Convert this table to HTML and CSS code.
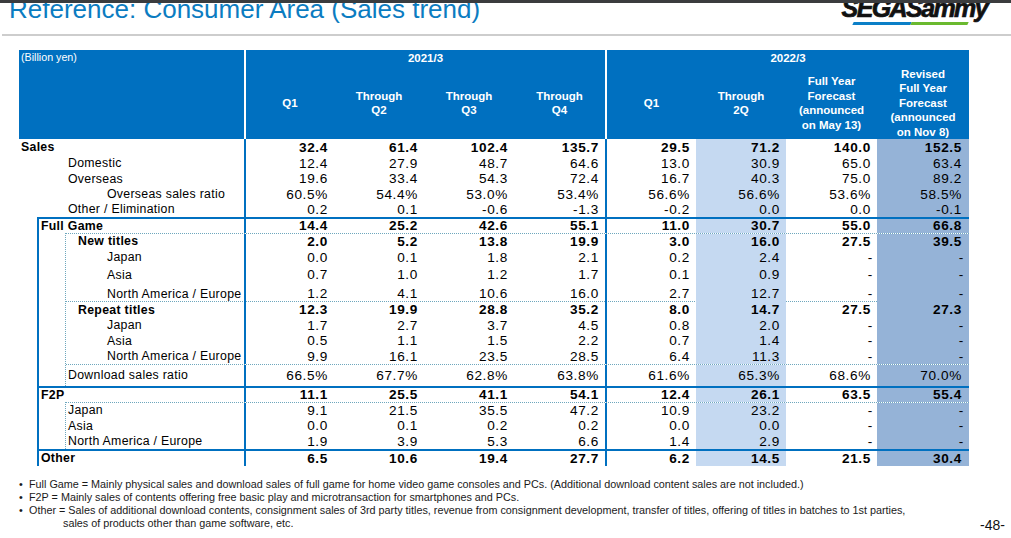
FILE: index.html
```html
<!DOCTYPE html>
<html>
<head>
<meta charset="utf-8">
<link rel="stylesheet" href="styles.css">
</head>
<body>
<div class="topbar"></div>
<header class="top">
  <h1 class="title">Reference: Consumer Area (Sales trend)</h1>
  <div class="logo">
    <span class="logo-text">SEGASammy</span>
    <span class="logo-bars"><i class="lb-blue"></i><i class="lb-green"></i></span>
  </div>
</header>

<main class="tbl">
  <div class="thead">
    <div class="unit">(Billion yen)</div>
    <div class="yr y1">2021/3</div>
    <div class="yr y2">2022/3</div>
    <div class="hc sep">Q1</div>
    <div class="hc">Through<br>Q2</div>
    <div class="hc">Through<br>Q3</div>
    <div class="hc">Through<br>Q4</div>
    <div class="hc sep">Q1</div>
    <div class="hc">Through<br>2Q</div>
    <div class="hc">Full Year<br>Forecast<br>(announced<br>on May 13)</div>
    <div class="hc">Revised<br>Full Year<br>Forecast<br>(announced<br>on Nov 8)</div>
  </div>

  <div class="r h17 b"><div class="l p2">Sales</div><div class="n">32.4</div><div class="n">61.4</div><div class="n">102.4</div><div class="n">135.7</div><div class="n">29.5</div><div class="n">71.2</div><div class="n">140.0</div><div class="n">152.5</div></div>
  <div class="r h15"><div class="l p49">Domestic</div><div class="n">12.4</div><div class="n">27.9</div><div class="n">48.7</div><div class="n">64.6</div><div class="n">13.0</div><div class="n">30.9</div><div class="n">65.0</div><div class="n">63.4</div></div>
  <div class="r h16"><div class="l p49">Overseas</div><div class="n">19.6</div><div class="n">33.4</div><div class="n">54.3</div><div class="n">72.4</div><div class="n">16.7</div><div class="n">40.3</div><div class="n">75.0</div><div class="n">89.2</div></div>
  <div class="r h15"><div class="l p88">Overseas sales ratio</div><div class="n">60.5%</div><div class="n">54.4%</div><div class="n">53.0%</div><div class="n">53.4%</div><div class="n">56.6%</div><div class="n">56.6%</div><div class="n">53.6%</div><div class="n">58.5%</div></div>
  <div class="r h15"><div class="l p49">Other / Elimination</div><div class="n">0.2</div><div class="n">0.1</div><div class="n">-0.6</div><div class="n">-1.3</div><div class="n">-0.2</div><div class="n">0.0</div><div class="n">0.0</div><div class="n">-0.1</div></div>

  <div class="grp">
    <div class="r h14 b"><div class="l p2">Full Game</div><div class="n">14.4</div><div class="n">25.2</div><div class="n">42.6</div><div class="n">55.1</div><div class="n">11.0</div><div class="n">30.7</div><div class="n">55.0</div><div class="n">66.8</div></div>
    <div class="sub">
      <div class="r h15 b"><div class="l p12">New titles</div><div class="n">2.0</div><div class="n">5.2</div><div class="n">13.8</div><div class="n">19.9</div><div class="n">3.0</div><div class="n">16.0</div><div class="n">27.5</div><div class="n">39.5</div></div>
      <div class="r h17"><div class="l p41">Japan</div><div class="n">0.0</div><div class="n">0.1</div><div class="n">1.8</div><div class="n">2.1</div><div class="n">0.2</div><div class="n">2.4</div><div class="n d">-</div><div class="n d">-</div></div>
      <div class="r h18"><div class="l p41">Asia</div><div class="n">0.7</div><div class="n">1.0</div><div class="n">1.2</div><div class="n">1.7</div><div class="n">0.1</div><div class="n">0.9</div><div class="n d">-</div><div class="n d">-</div></div>
      <div class="r h17 low"><div class="l p41">North America / Europe</div><div class="n">1.2</div><div class="n">4.1</div><div class="n">10.6</div><div class="n">16.0</div><div class="n">2.7</div><div class="n">12.7</div><div class="n d">-</div><div class="n d">-</div></div>
      <div class="r h16 b dl"><div class="l p12">Repeat titles</div><div class="n">12.3</div><div class="n">19.9</div><div class="n">28.8</div><div class="n">35.2</div><div class="n">8.0</div><div class="n">14.7</div><div class="n">27.5</div><div class="n">27.3</div></div>
      <div class="r h15"><div class="l p41">Japan</div><div class="n">1.7</div><div class="n">2.7</div><div class="n">3.7</div><div class="n">4.5</div><div class="n">0.8</div><div class="n">2.0</div><div class="n d">-</div><div class="n d">-</div></div>
      <div class="r h16"><div class="l p41">Asia</div><div class="n">0.5</div><div class="n">1.1</div><div class="n">1.5</div><div class="n">2.2</div><div class="n">0.7</div><div class="n">1.4</div><div class="n d">-</div><div class="n d">-</div></div>
      <div class="r h15"><div class="l p41">North America / Europe</div><div class="n">9.9</div><div class="n">16.1</div><div class="n">23.5</div><div class="n">28.5</div><div class="n">6.4</div><div class="n">11.3</div><div class="n d">-</div><div class="n d">-</div></div>
      <div class="r h21 dl"><div class="l p2">Download sales ratio</div><div class="n">66.5%</div><div class="n">67.7%</div><div class="n">62.8%</div><div class="n">63.8%</div><div class="n">61.6%</div><div class="n">65.3%</div><div class="n">68.6%</div><div class="n">70.0%</div></div>
    </div>
    <div class="r h14 b bl"><div class="l p2">F2P</div><div class="n">11.1</div><div class="n">25.5</div><div class="n">41.1</div><div class="n">54.1</div><div class="n">12.4</div><div class="n">26.1</div><div class="n">63.5</div><div class="n">55.4</div></div>
    <div class="sub sub2">
      <div class="r h15"><div class="l p2">Japan</div><div class="n">9.1</div><div class="n">21.5</div><div class="n">35.5</div><div class="n">47.2</div><div class="n">10.9</div><div class="n">23.2</div><div class="n d">-</div><div class="n d">-</div></div>
      <div class="r h16"><div class="l p2">Asia</div><div class="n">0.0</div><div class="n">0.1</div><div class="n">0.2</div><div class="n">0.2</div><div class="n">0.0</div><div class="n">0.0</div><div class="n d">-</div><div class="n d">-</div></div>
      <div class="r h15"><div class="l p2">North America / Europe</div><div class="n">1.9</div><div class="n">3.9</div><div class="n">5.3</div><div class="n">6.6</div><div class="n">1.4</div><div class="n">2.9</div><div class="n d">-</div><div class="n d">-</div></div>
    </div>
    <div class="r h15 b bl"><div class="l p2">Other</div><div class="n">6.5</div><div class="n">10.6</div><div class="n">19.4</div><div class="n">27.7</div><div class="n">6.2</div><div class="n">14.5</div><div class="n">21.5</div><div class="n">30.4</div></div>
  </div>
</main>

<footer class="foot">
  <ul class="notes">
    <li><span class="bul">•</span><span class="txt">Full Game = Mainly physical sales and download sales of full game for home video game consoles and PCs. (Additional download content sales are not included.)</span></li>
    <li><span class="bul">•</span><span class="txt">F2P = Mainly sales of contents offering free basic play and microtransaction for smartphones and PCs.</span></li>
    <li><span class="bul">•</span><span class="txt">Other = Sales of additional download contents, consignment sales of 3rd party titles, revenue from consignment development, transfer of titles, offering of titles in batches to 1st parties,<span class="cont">sales of products other than game software, etc.</span></span></li>
  </ul>
  <div class="page">-48-</div>
</footer>
</body>
</html>
```

FILE: styles.css
```css
* { box-sizing: border-box; }
html, body { margin: 0; padding: 0; }
body {
  width: 1011px;
  height: 538px;
  overflow: hidden;
  background: #fff;
  font-family: "Liberation Sans", Arial, sans-serif;
  color: #000;
}

/* top header */
.topbar {
  height: 3px;
  background: #3b3c3e;
}
.top {
  display: flex;
  justify-content: space-between;
  align-items: flex-start;
  height: 33px;
  margin-left: 2px;
  border-bottom: 2px solid #cdcdcd;
  overflow: hidden;
}
.title {
  margin: -7px 0 0 7px;
  font-size: 26px;
  line-height: 26px;
  font-weight: normal;
  color: #0b7cc1;
  white-space: nowrap;
}
.logo {
  display: flex;
  flex-direction: column;
  margin: -7px 24px 0 0;
  width: 146px;
}
.logo-text {
  font-size: 25px;
  line-height: 25px;
  font-weight: bold;
  font-style: italic;
  letter-spacing: -1.6px;
  color: #111;
  -webkit-text-stroke: 0.7px #111;
  white-space: nowrap;
  text-align: right;
}
.logo-bars {
  display: flex;
  margin: 1px 0 0 12px;
  transform: skewX(-25deg);
}
.logo-bars i { display: block; height: 3px; }
.lb-blue { width: 58px; background: #0b7fc7; }
.lb-green { width: 57px; background: #6ab92f; }

/* table */
.tbl {
  --lw: 225px;
  width: 950px;
  margin: 14px 0 0 19px;
}
.thead {
  display: grid;
  grid-template-columns: 225px 90px 90px 90px 91px 91px 90px 91px 92px;
  grid-template-rows: 17px 72px;
  background: #0070c0;
  color: #fff;
  font-weight: bold;
  font-size: 11.5px;
  line-height: 14.5px;
  text-align: center;
}
.unit {
  grid-row: 1 / 3;
  font-weight: normal;
  font-size: 10.7px;
  line-height: 14px;
  text-align: left;
  padding-left: 2px;
}
.yr {
  display: flex;
  align-items: center;
  justify-content: center;
  border-left: 2px solid #fff;
}
.y1 { grid-column: 2 / 6; }
.y2 { grid-column: 6 / 10; }
.hc {
  display: flex;
  align-items: center;
  justify-content: center;
}
.hc.sep { border-left: 2px solid #fff; }

.r {
  display: grid;
  grid-template-columns: var(--lw) 90px 90px 90px 91px 91px 90px 91px 92px;
  white-space: nowrap;
}
.h14 { height: 14px; line-height: 14px; }
.h15 { height: 15px; line-height: 15px; }
.h16 { height: 16px; line-height: 16px; }
.h17 { height: 17px; line-height: 17px; }
.h18 { height: 18px; line-height: 18px; }
.h21 { height: 21px; line-height: 21px; }
.low { line-height: 20px; }
.b { font-weight: bold; }

.l {
  font-size: 12.3px;
  letter-spacing: 0.3px;
}
.p2 { padding-left: 2px; }
.p12 { padding-left: 12px; }
.p41 { padding-left: 41px; }
.p49 { padding-left: 49px; }
.p88 { padding-left: 88px; }

.n {
  text-align: right;
  padding-right: 6px;
  font-size: 13.6px;
  letter-spacing: 0.65px;
}
.r > .n:nth-child(2),
.r > .n:nth-child(6) { border-left: 2px solid #0070c0; }
.r > .n:nth-child(7) { background: #c5d9f1; }
.r > .n:nth-child(9) { background: #95b3d7; padding-right: 7px; }
.r > .d { padding-right: 4px; }
.r > .d:nth-child(9) { padding-right: 5px; }

.grp {
  --lw: 205px;
  margin-left: 18px;
  border-left: 2px solid #0070c0;
  border-top: 2px solid #0070c0;
}
.sub {
  --lw: 178px;
  margin-left: 26px;
  border-left: 1px dotted #6ea7bd;
  border-top: 1px dotted #6ea7bd;
}
.dl { border-top: 1px dotted #6ea7bd; }
.dl.h16 { height: 17px; }
.dl.h21 { height: 22px; }
.bl { border-top: 2px solid #0070c0; }
.bl.h14 { height: 16px; }
.bl.h15 { height: 17px; }

/* footnotes */
.foot {
  display: flex;
  justify-content: space-between;
  align-items: flex-end;
  margin-top: 12px;
}
.notes {
  list-style: none;
  margin: 0;
  padding: 0 0 0 19px;
  font-size: 10.8px;
  line-height: 13px;
  color: #1a1a1a;
}
.notes li { display: flex; }
.bul { width: 10px; flex: none; }
.cont { display: block; padding-left: 34px; }
.page {
  font-size: 14px;
  line-height: 16px;
  margin: 0 6px -3px 0;
  color: #111;
}
```
